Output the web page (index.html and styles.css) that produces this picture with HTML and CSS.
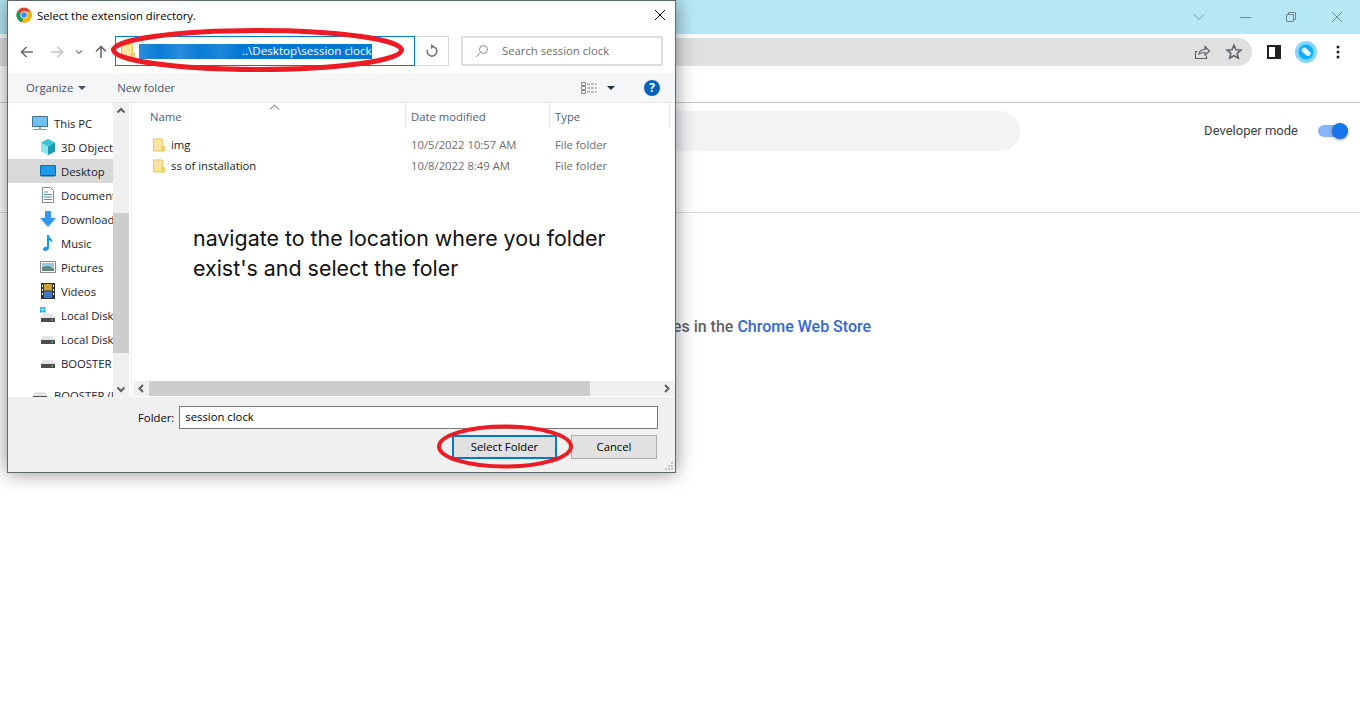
FILE: index.html
```html
<!DOCTYPE html>
<html lang="en">
<head>
    <meta charset="UTF-8">
    <meta name="viewport" content="width=device-width, initial-scale=1.0">
    <title>Extensions</title>
    <link rel="stylesheet" href="styles.css">
</head>
<body>

<svg class="defs" width="0" height="0">
    <symbol id="folder" viewBox="0 0 14 16">
        <path d="M.5 1.500h10l1 1v13H.5z" fill="#fde7a0" stroke="#e3bd4f"/>
        <path d="M10.500 10.500h3v5h-3z" fill="#fbd976" stroke="#e3bd4f"/>
    </symbol>
    <symbol id="drive" viewBox="0 0 16 16">
        <path d="M3 5h10l2 4H1z" fill="#e4e4e4"/>
        <path d="M1 9h14v4H1z" fill="#4d4d4d"/>
        <path d="M11 10.500h2v1h-2z" fill="#5fe05f"/>
    </symbol>
</svg>

<!-- browser behind the dialog -->
<div class="browser">
    <div class="tabstrip">
        <svg width="14" height="14" viewBox="0 0 14 14"><path d="M2 4.500l5 5 5-5" fill="none" stroke="#7b9aa3"/></svg>
        <svg width="14" height="14" viewBox="0 0 14 14"><path d="M2 7.500h11" fill="none" stroke="#6d8790"/></svg>
        <svg width="14" height="14" viewBox="0 0 14 14"><path d="M2.500 4.500h7v7h-7zM4.500 4.500v-2h7v7h-2" fill="none" stroke="#6d8790"/></svg>
        <svg width="14" height="14" viewBox="0 0 14 14"><path d="M2 2l10 10M12 2L2 12" fill="none" stroke="#6d8790"/></svg>
    </div>
    <div class="toolbar">
        <div class="omnibox">
            <svg width="18" height="18" viewBox="0 0 18 18"><path d="M4.500 8.500H2.500v7h11v-3M6 11c.5-3 3-4.500 6-4.500V3.500l4.500 4.500-4.500 4V9.500C9.500 9.500 7.500 10 6 11z" fill="none" stroke="#5f6368" stroke-width="1.200"/></svg>
            <svg width="18" height="18" viewBox="0 0 18 18"><path d="M9 2.200l2 4.500 4.900.5-3.700 3.200 1.100 4.800L9 12.700l-4.300 2.500 1.100-4.800L2.100 7.200 7 6.700z" fill="none" stroke="#5f6368" stroke-width="1.600"/></svg>
        </div>
        <div class="toolbar-icons">
            <svg width="14" height="14" viewBox="0 0 14 14"><path d="M0 0h14v14H0z" fill="#202124"/><path d="M2 2h6v10H2z" fill="#fff"/></svg>
            <svg class="ext-icon" width="22" height="22" viewBox="0 0 22 22"><circle cx="11" cy="11" r="11" fill="#86d6fb"/><circle cx="11" cy="11" r="7.500" fill="#0db0fd"/><path d="M6.500 9.500c0-2 2-3.500 3.500-3l2 1.500 3.500 3.500c.5 1.500-.5 3-2 3.500l-2-.5-4-3.500z" fill="#e8f4fb"/></svg>
            <svg class="menu-icon" width="4" height="14" viewBox="0 0 4 14"><circle cx="2" cy="2" r="1.500" fill="#202124"/><circle cx="2" cy="7" r="1.500" fill="#202124"/><circle cx="2" cy="12" r="1.500" fill="#202124"/></svg>
        </div>
    </div>
    <div class="ext-header">
        <div class="search-pill"></div>
        <div class="dev-mode">
            <span>Developer mode</span>
            <span class="switch"><span class="switch-knob"></span></span>
        </div>
    </div>
    <p class="empty-msg">Find extensions and themes in the <a class="store-link">Chrome Web Store</a></p>
</div>

<!-- file picker -->
<div class="dialog">
    <div class="title-row">
        <svg width="16" height="16" viewBox="0 0 16 16">
            <circle cx="8" cy="8" r="7.500" fill="#db4437"/>
            <path d="M8 8L1.500 4.300A7.500 7.500 0 0 0 6 15.300z" fill="#0f9d58"/>
            <path d="M8 4.500h6.900A7.500 7.500 0 0 1 6 15.300L8 8z" fill="#f4b400"/>
            <circle cx="8" cy="8" r="3.600" fill="#fff"/>
            <circle cx="8" cy="8" r="2.800" fill="#4285f4"/>
        </svg>
        <span class="title-text">Select the extension directory.</span>
        <svg class="close-x" width="12" height="12" viewBox="0 0 12 12"><path d="M1 1l10 10M11 1L1 11" stroke="#000" fill="none"/></svg>
    </div>

    <div class="nav-row">
        <svg class="nav-arrow" width="14" height="12" viewBox="0 0 14 12"><path d="M13 6H2M6.500 1L1.500 6l5 5" fill="none" stroke="#6d6d6d" stroke-width="1.600"/></svg>
        <svg class="nav-arrow nav-forward" width="14" height="12" viewBox="0 0 14 12"><path d="M1 6h11M7.500 1l5 5-5 5" fill="none" stroke="#c4c4c4" stroke-width="1.600"/></svg>
        <svg class="nav-down" width="8" height="6" viewBox="0 0 8 6"><path d="M1 1.500l3 3 3-3" fill="none" stroke="#7d7d7d" stroke-width="1.200"/></svg>
        <svg class="nav-arrow nav-up" width="12" height="14" viewBox="0 0 12 14"><path d="M6 13V2M1 6.500l5-5 5 5" fill="none" stroke="#6d6d6d" stroke-width="1.600"/></svg>
        <div class="address">
            <svg class="folder-icon" width="14" height="16"><use href="#folder"/></svg>
            <span class="selection"><span class="blurred"></span>..\Desktop\session clock</span>
        </div>
        <div class="refresh">
            <svg width="14" height="14" viewBox="0 0 14 14"><path d="M7 2.500a4.800 4.800 0 1 1-4.500 3.200" fill="none" stroke="#777" stroke-width="1.600"/><path d="M6 0l3.500 2.500L6 5z" fill="#777"/></svg>
        </div>
        <div class="search-box">
            <svg width="14" height="14" viewBox="0 0 14 14"><circle cx="8.500" cy="5.500" r="4" fill="none" stroke="#8a8a8a"/><path d="M5.500 8.500L1 13" stroke="#b08a8a" fill="none"/></svg>
            <span class="search-text">Search session clock</span>
        </div>
    </div>

    <div class="tool-row">
        <span>Organize</span>
        <span class="caret"></span>
        <span class="new-folder">New folder</span>
        <svg class="view-icon" width="16" height="14" viewBox="0 0 16 14"><path d="M.5 1.500h4v3h-4zM.5 5.500h4v3h-4zM.5 9.500h4v3h-4z" fill="none" stroke="#8a8a8a"/><path d="M6 3h10M6 7h10M6 11h10" stroke="#8a8a8a" stroke-dasharray="3 1" fill="none"/></svg>
        <span class="caret dark"></span>
        <span class="help">?</span>
    </div>

    <div class="body-row">
        <div class="sidebar">
            <div class="side-item top-level">
                <svg width="16" height="16" viewBox="0 0 16 16"><path d="M.5 1.500h15v10H.5z" fill="#6ec1f0" stroke="#4a6f8a"/><path d="M1 14h14v1H1zM7 12h2v2H7z" fill="#8a9aa8"/></svg>
                <span>This PC</span>
            </div>
            <div class="side-item">
                <svg width="16" height="16" viewBox="0 0 16 16"><path d="M8 0l7 3.500v9L8 16l-7-3.500v-9z" fill="#8fe6ee"/><path d="M8 7.500V16l7-3.500v-9z" fill="#1d97b5"/><path d="M8 7.500L1 3.500 8 0l7 3.500z" fill="#3cc4d8"/></svg>
                <span>3D Objects</span>
            </div>
            <div class="side-item active">
                <svg width="16" height="16" viewBox="0 0 16 16"><path d="M.5 2.500h15v10H.5z" fill="#1e9be8" stroke="#0b6fb5"/><path d="M1 12h14v1.500H1z" fill="#0b5f9e"/></svg>
                <span>Desktop</span>
            </div>
            <div class="side-item">
                <svg width="16" height="16" viewBox="0 0 16 16"><path d="M2.500.5h8l3 3v12h-11z" fill="#fff" stroke="#7d8b96"/><path d="M4 5h4M4 7.500h8M4 10h8M4 12.500h8" stroke="#5a8fb5" fill="none"/></svg>
                <span>Documents</span>
            </div>
            <div class="side-item">
                <svg width="16" height="16" viewBox="0 0 16 16"><path d="M5 0h6v7h5l-8 9-8-9h5z" fill="#3a96e8"/></svg>
                <span>Downloads</span>
            </div>
            <div class="side-item">
                <svg width="16" height="16" viewBox="0 0 16 16"><path d="M7 0h2c0 3 4 3.500 3.500 8C11.500 6 10 5.500 9 5.500V13c0 2-2 3-4 3-1.500 0-2-1-2-1.500C3 12.500 5 11.500 7 12z" fill="#1e9be8"/></svg>
                <span>Music</span>
            </div>
            <div class="side-item">
                <svg width="16" height="16" viewBox="0 0 16 16"><path d="M.5 2.500h15v11H.5z" fill="#fff" stroke="#8a8a8a"/><path d="M2 4h12v4H2z" fill="#9cc7e6"/><path d="M2 8l6-1 6 2v3H2z" fill="#5d8a78"/></svg>
                <span>Pictures</span>
            </div>
            <div class="side-item">
                <svg width="16" height="16" viewBox="0 0 16 16"><path d="M1 0h14v16H1z" fill="#333"/><path d="M4 1h8v6.500H4z" fill="#c9a23e"/><path d="M4 8.500h8V15H4z" fill="#3f74c9"/><path d="M2 2h1v2H2zM2 6h1v2H2zM2 10h1v2H2zM13 2h1v2h-1zM13 6h1v2h-1zM13 10h1v2h-1z" fill="#fff"/></svg>
                <span>Videos</span>
            </div>
            <div class="side-item">
                <svg width="16" height="16" viewBox="0 0 16 16"><use href="#drive" y="2"/><path d="M0 0h2.500v2.500H0zM3 0h2.500v2.500H3zM0 3h2.500v2.500H0zM3 3h2.500v2.500H3z" fill="#1fb4f0"/></svg>
                <span>Local Disk</span>
            </div>
            <div class="side-item">
                <svg width="16" height="16"><use href="#drive"/></svg>
                <span>Local Disk</span>
            </div>
            <div class="side-item">
                <svg width="16" height="16"><use href="#drive"/></svg>
                <span>BOOSTER (</span>
            </div>
            <div class="side-item top-level last">
                <svg width="16" height="16"><use href="#drive"/></svg>
                <span>BOOSTER (I</span>
            </div>
        </div>
        <div class="side-scroll">
            <svg width="16" height="16" viewBox="0 0 16 16"><path d="M4.500 9.500L8 6l3.500 3.500" fill="none" stroke="#606060" stroke-width="2"/></svg>
            <div class="side-track"><div class="side-thumb"></div></div>
            <svg width="16" height="16" viewBox="0 0 16 16"><path d="M4.500 6.500L8 10l3.500-3.500" fill="none" stroke="#606060" stroke-width="2"/></svg>
        </div>

        <div class="files">
            <div class="sort-mark"></div>
            <div class="file-head">
                <span class="col-name">Name</span>
                <span class="col-date">Date modified</span>
                <span class="col-type">Type</span>
            </div>
            <div class="file-row">
                <span class="col-name"><svg width="12" height="15"><use href="#folder"/></svg>img</span>
                <span class="col-date">10/5/2022 10:57 AM</span>
                <span class="col-type">File folder</span>
            </div>
            <div class="file-row">
                <span class="col-name"><svg width="12" height="15"><use href="#folder"/></svg>ss of installation</span>
                <span class="col-date">10/8/2022 8:49 AM</span>
                <span class="col-type">File folder</span>
            </div>
            <p class="note">navigate to the location where you folder<br>exist's and select the foler</p>
            <div class="h-scroll">
                <svg width="16" height="15" viewBox="0 0 16 15"><path d="M10 4L6.500 7.500 10 11" fill="none" stroke="#606060" stroke-width="2"/></svg>
                <div class="h-track"><div class="h-thumb"></div></div>
                <svg width="16" height="15" viewBox="0 0 16 15"><path d="M6 4l3.500 3.500L6 11" fill="none" stroke="#606060" stroke-width="2"/></svg>
            </div>
        </div>
    </div>

    <div class="footer">
        <div class="folder-row">
            <span>Folder:</span>
            <div class="folder-input">session clock</div>
        </div>
        <div class="button-row">
            <span class="btn primary">Select Folder</span>
            <span class="btn">Cancel</span>
        </div>
        <svg class="grip" width="10" height="10" viewBox="0 0 10 10"><path d="M7 1h2v2H7zM4 4h2v2H4zM7 4h2v2H7zM1 7h2v2H1zM4 7h2v2H4zM7 7h2v2H7z" fill="#c4c4c4"/></svg>
    </div>
</div>

<!-- red marks drawn on the screenshot -->
<svg class="marks" width="1360" height="722">
    <ellipse cx="257.500" cy="50" rx="144" ry="19.500" fill="none" stroke="#ed1c24" stroke-width="5"/>
    <ellipse cx="505" cy="446.500" rx="66" ry="20" fill="none" stroke="#ed1c24" stroke-width="4"/>
</svg>

</body>
</html>
```

FILE: styles.css
```css
body {
    margin: 0;
    background-color: #fff;
    font-family: 'Open Sans', sans-serif;
    overflow: hidden;
}

.defs {
    position: absolute;
}

/* browser */
.browser {
    height: 722px;
    font-family: 'Roboto', sans-serif;
}

.tabstrip {
    height: 34px;
    background-color: #b6e8f3;
    display: flex;
    justify-content: flex-end;
    align-items: center;
    gap: 32px;
    padding-right: 16px;
}

.toolbar {
    height: 64px;
    border-bottom: 1px solid #c8c8c8;
    display: flex;
    align-items: flex-start;
    padding-top: 4px;
}

.omnibox {
    width: 1252px;
    height: 28px;
    background-color: #e0e0e0;
    border-radius: 0 14px 14px 0;
    display: flex;
    justify-content: flex-end;
    align-items: center;
    gap: 14px;
    padding-right: 9px;
    box-sizing: border-box;
}

.toolbar-icons {
    flex: 1;
    height: 28px;
    display: flex;
    align-items: center;
    padding-left: 15px;
}

.ext-icon {
    margin-left: 14px;
}

.menu-icon {
    margin-left: 19px;
}

.ext-header {
    height: 110px;
    display: grid;
    grid-template-columns: 1fr 680px 1fr;
    border-bottom: 1px solid #dadce0;
    padding-top: 8px;
    box-sizing: border-box;
}

.search-pill {
    grid-column: 2;
    height: 40px;
    background-color: #f1f3f4;
    border-radius: 20px;
}

.dev-mode {
    display: flex;
    align-items: center;
    justify-content: flex-end;
    height: 39px;
    padding-right: 12px;
    gap: 20px;
    font-size: 13px;
    color: #3c4043;
}

.switch {
    width: 30px;
    height: 12px;
    background-color: #8ab4f8;
    border-radius: 6px;
    position: relative;
}

.switch-knob {
    position: absolute;
    right: 0;
    top: -2px;
    width: 16px;
    height: 16px;
    background-color: #1a73e8;
    border-radius: 50%;
    box-shadow: 0 1px 3px rgba(0, 0, 0, 0.4);
}

.empty-msg {
    margin: 105px 0 0;
    text-align: center;
    font-size: 16px;
    font-weight: 500;
    line-height: 18px;
    color: #5f6368;
}

.store-link {
    color: #3367d6;
}

/* dialog */
.dialog {
    position: absolute;
    left: 7px;
    top: 0;
    width: 669px;
    height: 473px;
    box-sizing: border-box;
    border: 1px solid #5a6a70;
    background-color: #fff;
    box-shadow: 0 0 18px rgba(0, 0, 0, 0.45);
    display: flex;
    flex-direction: column;
    font-size: 11.300px;
    color: #1a1a1a;
}

.title-row {
    height: 28px;
    flex: none;
    display: flex;
    align-items: center;
    padding: 0 9px 0 8px;
    gap: 5px;
}

.title-text {
    color: #000;
}

.close-x {
    margin-left: auto;
}

.nav-row {
    height: 44px;
    flex: none;
    display: flex;
    align-items: flex-start;
}

.nav-arrow {
    flex: none;
    margin-top: 17px;
    margin-left: 12px;
}

.nav-forward {
    margin-left: 16px;
}

.nav-down {
    flex: none;
    margin: 20px 0 0 11px;
}

.nav-up {
    margin-left: 12px;
    margin-top: 16px;
}

.address {
    width: 300px;
    height: 30px;
    margin-left: 8px;
    margin-top: 7px;
    border: 1px solid #0078d7;
    box-sizing: border-box;
    display: flex;
    align-items: center;
    padding-left: 5px;
    flex: none;
}

.folder-icon {
    flex: none;
}

.selection {
    margin-left: 4px;
    height: 15px;
    line-height: 13px;
    font-size: 11.600px;
    background-color: #0078d7;
    color: #fff;
    white-space: nowrap;
    display: flex;
}

/* the path start is smeared out in the screenshot */
.blurred {
    width: 103px;
    background: linear-gradient(90deg, #2a8bdb, #0a7cd8 20%, #2a8bdb 40%, #0a7cd8 60%, #1f86da 80%, #0078d7);
}

.refresh {
    width: 34px;
    height: 30px;
    margin-top: 7px;
    border: 1px solid #d9d9d9;
    border-left: none;
    box-sizing: border-box;
    display: flex;
    align-items: center;
    justify-content: center;
    flex: none;
}

.search-box {
    width: 202px;
    height: 30px;
    margin-top: 7px;
    margin-left: 12px;
    border: 2px solid #dfdfdf;
    box-sizing: border-box;
    display: flex;
    align-items: center;
    padding-left: 12px;
    gap: 13px;
    color: #6d6d6d;
    flex: none;
}

.search-text {
    margin-bottom: 2px;
}

.tool-row {
    height: 30px;
    flex: none;
    background-color: #f5f6f7;
    border-bottom: 1px solid #e8e8e8;
    box-sizing: border-box;
    display: flex;
    align-items: center;
    padding-left: 18px;
    color: #44546a;
}

.caret {
    width: 0;
    height: 0;
    border-left: 4px solid transparent;
    border-right: 4px solid transparent;
    border-top: 4px solid #44546a;
    margin-left: 5px;
}

.new-folder {
    margin-left: 31px;
}

.view-icon {
    margin-left: auto;
}

.caret.dark {
    border-top-color: #1b2f55;
    margin-left: 10px;
}

.help {
    width: 16px;
    height: 16px;
    border-radius: 50%;
    background-color: #0563bb;
    color: #fff;
    font-size: 12px;
    font-weight: 700;
    line-height: 16px;
    text-align: center;
    margin-left: 29px;
    margin-right: 15px;
}

.body-row {
    height: 294px;
    flex: none;
    display: flex;
}

.sidebar {
    width: 105px;
    flex: none;
    overflow: hidden;
    padding-top: 8px;
    box-sizing: border-box;
}

.side-item {
    height: 24px;
    display: flex;
    align-items: center;
    padding-left: 32px;
    gap: 5px;
    white-space: nowrap;
    color: #1a1a2a;
}

.side-item svg {
    flex: none;
}

.side-item.active {
    background-color: #d9d9d9;
}

.side-item.top-level {
    padding-left: 24px;
    gap: 6px;
}

.side-item.last {
    margin-top: 8px;
}

.side-scroll {
    width: 16px;
    flex: none;
    background-color: #f0f0f0;
    display: flex;
    flex-direction: column;
}

.side-track {
    flex: 1;
    padding-top: 94px;
}

.side-thumb {
    height: 140px;
    background-color: #cdcdcd;
}

.files {
    flex: 1;
    margin-left: 2px;
    position: relative;
    display: flex;
    flex-direction: column;
    border-left: 1px solid #f0f0f0;
}

.sort-mark {
    position: absolute;
    left: 139px;
    top: 0;
    width: 6px;
    height: 6px;
    border-left: 1px solid #888;
    border-top: 1px solid #888;
    transform: rotate(45deg) translate(2px, 2px);
}

.file-head {
    height: 25px;
    display: flex;
    color: #4c607a;
    margin-bottom: 6px;
}

.file-head span {
    line-height: 27px;
}

.file-row {
    height: 21px;
    display: flex;
    align-items: center;
    color: #6d6d6d;
}

.col-name {
    width: 273px;
    padding-left: 18px;
    box-sizing: border-box;
    flex: none;
}

.col-date {
    width: 144px;
    padding-left: 6px;
    box-sizing: border-box;
    flex: none;
}

.file-head .col-date,
.file-head .col-type {
    border-left: 1px solid #e5e5e5;
    padding-left: 5px;
    box-sizing: border-box;
}

.file-head .col-type {
    width: 121px;
    border-right: 1px solid #e5e5e5;
}

.file-row .col-type {
    padding-left: 6px;
}

.file-row .col-name {
    display: flex;
    align-items: center;
    gap: 6px;
    padding-left: 21px;
    color: #1a1a1a;
}

.note {
    position: absolute;
    left: 61px;
    top: 120px;
    margin: 0;
    font-family: 'Inter', sans-serif;
    font-size: 21.400px;
    line-height: 30px;
    color: #111;
    white-space: nowrap;
}

.h-scroll {
    margin-top: auto;
    margin-bottom: 1px;
    margin-left: 1px;
    height: 15px;
    display: flex;
    background-color: #f0f0f0;
}

.h-track {
    flex: 1;
    padding-right: 69px;
}

.h-thumb {
    height: 15px;
    background-color: #cdcdcd;
}

/* footer */
.footer {
    flex: 1;
    background-color: #f0f0f0;
    position: relative;
    color: #000;
    padding: 9px 17px 0 130px;
}

.folder-row {
    display: flex;
    align-items: center;
    gap: 5px;
}

.folder-input {
    flex: 1;
    height: 23px;
    line-height: 20px;
    padding-left: 5px;
    background-color: #fff;
    border: 1px solid #7a7a7a;
    box-sizing: border-box;
}

.button-row {
    display: flex;
    justify-content: flex-end;
    gap: 14px;
    margin-top: 6px;
    margin-right: 1px;
}

.btn {
    width: 86px;
    height: 24px;
    line-height: 22px;
    text-align: center;
    background-color: #e1e1e1;
    border: 1px solid #adadad;
    box-sizing: border-box;
}

.btn.primary {
    width: 105px;
    border: 2px solid #0078d7;
    line-height: 20px;
}

.grip {
    position: absolute;
    right: 1px;
    bottom: 1px;
}

/* annotation */
.marks {
    position: absolute;
    left: 0;
    top: 0;
    pointer-events: none;
}
```
